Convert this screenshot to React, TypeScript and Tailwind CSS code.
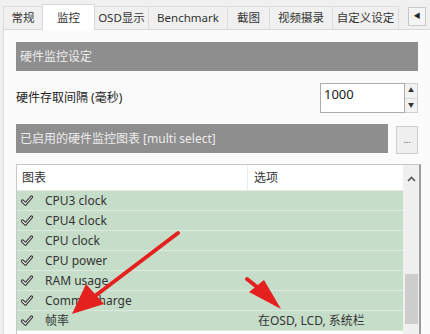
import React from "react";

const FONT = { fontFamily: '"Noto Sans", "Noto Sans CJK SC", sans-serif' };

const tabs = [
  { t: "常规", w: "w-[40px]" },
  { t: "监控", w: "w-[53px]" },
  { t: "OSD显示", w: "w-[55px]" },
  { t: "Benchmark", w: "w-[80px]" },
  { t: "截图", w: "w-[43px]" },
  { t: "视频摄录", w: "w-[64px]" },
  { t: "自定义设定", w: "w-[67px]" },
];

const rows = [
  { name: "CPU3 clock", opt: "" },
  { name: "CPU4 clock", opt: "" },
  { name: "CPU clock", opt: "" },
  { name: "CPU power", opt: "" },
  { name: "RAM usage", opt: "" },
  { name: "Commit charge", opt: "" },
  { name: "帧率", opt: "在OSD, LCD, 系统栏" },
];

function Check() {
  return (
    <svg width="12" height="11" viewBox="0 0 12 11" className="shrink-0">
      <path d="M1.5 6 L4.5 9 L10.5 2" fill="none" stroke="#333" strokeWidth="3.2" strokeLinecap="round" strokeLinejoin="round" />
      <path d="M1.5 6 L4.5 9 L10.5 2" fill="none" stroke="#f4f4f4" strokeWidth="1.1" strokeLinecap="round" strokeLinejoin="round" />
    </svg>
  );
}

export default function App() {
  return (
    <div className="relative w-[430px] h-[334px] overflow-hidden bg-[#f0f0f0] text-[12px] text-[#333]" style={FONT}>
      {/* tab strip */}
      <div className="flex items-end h-[29px] pl-[3px] text-[11.5px] whitespace-nowrap">
        {tabs.map((tab, i) =>
          i === 1 ? (
            <div key={tab.t} className={`${tab.w} shrink-0 h-[26px] flex items-center justify-center bg-white border border-b-0 border-[#d9d9d9] relative z-10 -mb-px -ml-px`}>
              {tab.t}
            </div>
          ) : (
            <div key={tab.t} className={`${tab.w} shrink-0 h-[23px] flex items-center justify-center border border-b-0 border-[#dcdcdc] bg-[#f0f0f0] -ml-px first:ml-0`}>
              {tab.t}
            </div>
          )
        )}
        <div className="ml-auto mr-[4px] mb-[3px] w-[18px] h-[19px] shrink-0 border border-[#c8c8c8] bg-[#f4f4f4] flex items-center justify-center text-[7px] text-[#222]">
          ◀
        </div>
      </div>

      {/* panel */}
      <div className="ml-[3px] h-[310px] border border-r-0 border-[#d9d9d9] bg-[#fbfbfb] pl-[12px] pr-[12px] pt-[12px]">
        <div className="h-[29px] bg-[#8e8e8e] text-[#ececec] flex items-center pl-[4px]">硬件监控设定</div>

        <div className="mt-[12px] flex items-center h-[30px]">
          <span className="text-[#222]">硬件存取间隔 (毫秒)</span>
          <div className="ml-auto flex h-[30px]">
            <div className="w-[85px] border border-[#acacac] bg-white pl-[3px] pt-[1px] text-[13px] text-[#222]">1000</div>
            <div className="w-[13px] flex flex-col border border-l-0 border-[#d0d0d0] bg-[#f2f2f2]">
              <div className="flex-1 flex items-center justify-center text-[6px] border-b border-[#d8d8d8]">▲</div>
              <div className="flex-1 flex items-center justify-center text-[6px]">▼</div>
            </div>
          </div>
        </div>

        <div className="mt-[11px] flex items-start">
          <div className="w-[372px] h-[29px] bg-[#8e8e8e] text-[#ececec] flex items-center pl-[4px]">
            已启用的硬件监控图表 [multi select]
          </div>
          <div className="ml-auto mt-[2px] w-[22px] h-[28px] border border-[#cfcfcf] bg-[#efefef] flex items-center justify-center text-[9px] text-[#555] leading-none pb-[2px]">
            ...
          </div>
        </div>

        {/* list */}
        <div className="mt-[10px] w-[405px] h-[180px] border border-[#c8c8c8] border-r-[#9c9c9c] border-r-2 bg-white flex">
          <div className="flex-1 flex flex-col">
            <div className="h-[26px] flex items-center border-b border-[#e8e8e8] bg-white">
              <div className="w-[231px] pl-[5px] border-r border-[#ececec] h-full flex items-center">图表</div>
              <div className="pl-[6px]">选项</div>
            </div>
            {rows.map((r) => (
              <div key={r.name} className="h-[20px] bg-[#c6dec9] border-b border-[#dcebdd] flex items-center">
                <div className="w-[231px] pl-[4px] flex items-center gap-[12px]">
                  <Check />
                  <span>{r.name}</span>
                </div>
                <div className="pl-[10px]">{r.opt}</div>
              </div>
            ))}
          </div>
          <div className="w-[16px] bg-[#f0f0f0] flex flex-col items-center">
            <svg width="9" height="6" viewBox="0 0 9 6" className="mt-[11px]">
              <path d="M1 5 L4.5 1.5 L8 5" fill="none" stroke="#555" strokeWidth="1.6" />
            </svg>
            <div className="mt-[92px] w-[13px] h-[50px] bg-[#cdcdcd]" />
          </div>
        </div>
      </div>

      {/* red annotation arrows */}
      <svg className="absolute left-0 top-0 pointer-events-none" width="430" height="334" viewBox="0 0 430 334">
        <line x1="178" y1="233" x2="95" y2="296" stroke="#e4211f" strokeWidth="4" strokeLinecap="round" />
        <polygon points="72,314 86,284 104,304" fill="#e4211f" />
        <polygon points="281,309 249,292 264,280" fill="#e4211f" />
        <line x1="257" y1="287" x2="247" y2="279" stroke="#e4211f" strokeWidth="4" strokeLinecap="round" />
      </svg>
    </div>
  );
}
